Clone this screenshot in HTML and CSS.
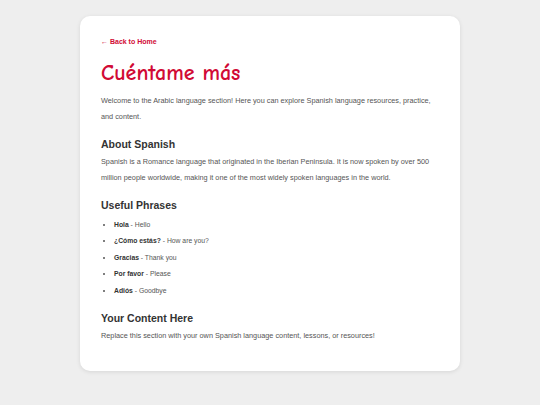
FILE: index.html
```html
<!DOCTYPE html>
<html lang="es">
<head>
<meta charset="utf-8">
<title>Cuéntame más</title>
<link rel="stylesheet" href="styles.css">
</head>
<body>
<main class="card">
  <a class="back" href="#">← Back to Home</a>
  <h1 class="title">Cuéntame más</h1>
  <p class="text">Welcome to the Arabic language section! Here you can explore Spanish language resources, practice, and content.</p>
  <h2 class="heading">About Spanish</h2>
  <p class="text">Spanish is a Romance language that originated in the Iberian Peninsula. It is now spoken by over 500 million people worldwide, making it one of the most widely spoken languages in the world.</p>
  <h2 class="heading">Useful Phrases</h2>
  <ul class="phrases">
    <li><strong>Hola</strong> - Hello</li>
    <li><strong>¿Cómo estás?</strong> - How are you?</li>
    <li><strong>Gracias</strong> - Thank you</li>
    <li><strong>Por favor</strong> - Please</li>
    <li><strong>Adiós</strong> - Goodbye</li>
  </ul>
  <h2 class="heading">Your Content Here</h2>
  <p class="text">Replace this section with your own Spanish language content, lessons, or resources!</p>
</main>
</body>
</html>
```
FILE: styles.css
```css
html, body {
  margin: 0;
  padding: 0;
}
body {
  background: #eeeeee;
  font-family: "Liberation Sans", Arial, sans-serif;
  color: #333333;
  padding: 16px 0 34px;
}
.card {
  display: block;
  width: 338px;
  margin: 0 auto;
  background: #ffffff;
  border-radius: 10px;
  box-shadow: 0 1px 4px rgba(0, 0, 0, 0.1);
  padding: 21px 21px 27px;
}
.back {
  display: block;
  color: #d10a35;
  font-size: 7px;
  font-weight: bold;
  text-decoration: none;
  line-height: 9px;
}
.title {
  font-family: "Comic Sans MS", "Comic Neue", cursive;
  color: #d10a35;
  font-size: 22px;
  font-weight: bold;
  line-height: 28px;
  margin: 13px 0 6px;
}
.text {
  font-size: 7.3px;
  line-height: 16px;
  color: #555555;
  margin: 0;
}
.heading {
  font-size: 10.5px;
  font-weight: bold;
  color: #333333;
  margin: 11.5px 0 3.5px;
  line-height: 14px;
}
.phrases {
  margin: 5px 0 0;
  padding-left: 13px;
  font-size: 6.8px;
  color: #555555;
}
.phrases li {
  line-height: 16.5px;
}
.phrases strong {
  color: #333333;
}
```
